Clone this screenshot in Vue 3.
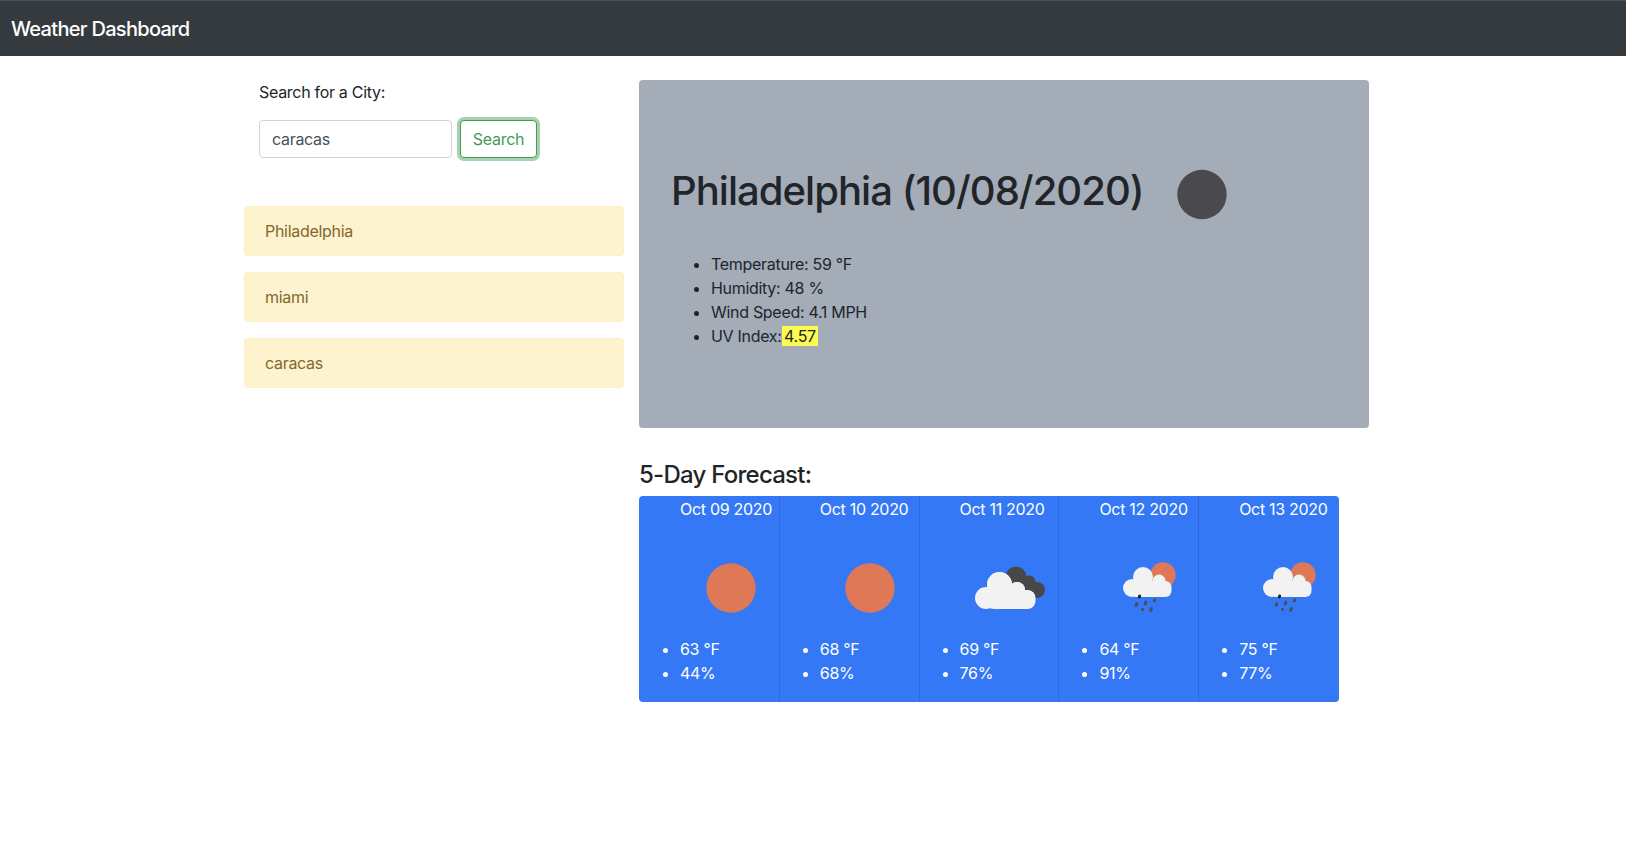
<script setup>
import { ref } from 'vue'

const city = ref('caracas')
const history = ['Philadelphia', 'miami', 'caracas']

const forecast = [
  { date: 'Oct 09 2020', icon: 'sun', temp: '63 °F', humidity: '44%' },
  { date: 'Oct 10 2020', icon: 'sun', temp: '68 °F', humidity: '68%' },
  { date: 'Oct 11 2020', icon: 'clouds', temp: '69 °F', humidity: '76%' },
  { date: 'Oct 12 2020', icon: 'rain', temp: '64 °F', humidity: '91%' },
  { date: 'Oct 13 2020', icon: 'rain', temp: '75 °F', humidity: '77%' }
]
</script>

<template>
  <nav class="navbar">Weather Dashboard</nav>

  <main class="page">
    <aside class="sidebar">
      <form class="search" @submit.prevent>
        <label class="search-label" for="city">Search for a City:</label>
        <div class="search-row">
          <input id="city" v-model="city" class="search-input" type="text" />
          <button class="search-btn" type="submit">Search</button>
        </div>
      </form>
      <div class="history">
        <div v-for="name in history" :key="name" class="alert">{{ name }}</div>
      </div>
    </aside>

    <section class="content">
      <div class="jumbotron">
        <div class="current-head">
          <h1 class="current-title">Philadelphia (10/08/2020)</h1>
          <svg class="icon" viewBox="0 0 100 100">
            <circle cx="50" cy="50.5" r="24.7" fill="#4a4a4c" />
          </svg>
        </div>
        <ul class="current-list">
          <li>Temperature: 59 °F</li>
          <li>Humidity: 48 %</li>
          <li>Wind Speed: 4.1 MPH</li>
          <li>UV Index:<span class="uv">4.57</span></li>
        </ul>
      </div>

      <h2 class="forecast-title">5-Day Forecast:</h2>
      <div class="forecast">
        <div v-for="day in forecast" :key="day.date" class="day">
          <div class="day-date">{{ day.date }}</div>
          <svg class="icon" viewBox="0 0 100 100">
            <circle v-if="day.icon === 'sun'" cx="50" cy="50" r="24.7" fill="#df7856" />
            <g v-else-if="day.icon === 'clouds'">
              <g fill="#48484a">
                <circle cx="56" cy="39" r="10.5" />
                <circle cx="69" cy="44" r="6.5" />
                <circle cx="77" cy="52" r="8" />
                <rect x="50" y="42" width="25" height="17" />
              </g>
              <g fill="#f2f2f3" stroke="#3a4a66" stroke-opacity="0.35" stroke-width="0.5">
                <circle cx="39.5" cy="46.5" r="12.5" />
                <circle cx="57" cy="52" r="8" />
              </g>
              <g fill="#f2f2f3">
                <circle cx="39.5" cy="46.5" r="12.5" />
                <circle cx="57" cy="52" r="8" />
                <circle cx="26" cy="60" r="11" />
                <rect x="26" y="52" width="49.5" height="19" rx="8" />
              </g>
            </g>
            <g v-else>
              <circle cx="63" cy="37" r="12.7" fill="#df7856" />
              <g fill="#f2f2f3">
                <circle cx="43" cy="39" r="10" />
                <circle cx="59" cy="43" r="6.5" />
                <circle cx="32" cy="50" r="9" />
                <rect x="30" y="43" width="41.5" height="16" rx="6" />
              </g>
              <g fill="#47505f">
                <rect x="38" y="56.5" width="3" height="4" rx="1.4" transform="rotate(20 39.5 58.5)" fill="#1e2430" />
                <rect x="35" y="64" width="3" height="5" rx="1.4" transform="rotate(20 36.5 66.5)" />
                <rect x="44" y="62.5" width="3" height="5" rx="1.4" transform="rotate(20 45.5 65)" />
                <rect x="53" y="60.5" width="3" height="4" rx="1.4" transform="rotate(20 54.5 62.5)" />
                <rect x="41" y="70" width="3" height="3" rx="1.4" transform="rotate(20 42.5 71.5)" />
                <rect x="49.5" y="69" width="3" height="5" rx="1.4" transform="rotate(20 51 71.5)" />
              </g>
            </g>
          </svg>
          <ul class="day-list">
            <li>{{ day.temp }}</li>
            <li>{{ day.humidity }}</li>
          </ul>
        </div>
      </div>
    </section>
  </main>
</template>

<style>
body {
  background: #fff;
}
</style>

<style scoped>
.navbar {
  height: 56px;
  box-sizing: border-box;
  padding-left: 11px;
  display: flex;
  align-items: center;
  background: #353a3f;
  border-top: 1px solid #4b5056;
  color: #fff;
  font-family: Inter, "Liberation Sans", sans-serif;
  font-size: 20px;
  font-weight: 500;
  letter-spacing: -0.7px;
}

.page {
  display: flex;
  gap: 15px;
  padding: 24px 0 0 244px;
  font-family: Inter, "Liberation Sans", sans-serif;
  font-size: 16px;
  line-height: 24px;
  letter-spacing: -0.3px;
  color: #212529;
}

.sidebar {
  width: 380px;
  flex-shrink: 0;
}

.search {
  padding-left: 15px;
}

.search-label {
  display: block;
  margin-bottom: 16px;
}

.search-row {
  display: flex;
  gap: 8px;
}

.search-input {
  width: 193px;
  height: 38px;
  box-sizing: border-box;
  padding: 0 12px;
  border: 1px solid #ced4da;
  border-radius: 4px;
  outline: none;
  color: #495057;
  font: inherit;
  letter-spacing: inherit;
}

.search-btn {
  width: 77px;
  height: 38px;
  box-sizing: border-box;
  padding: 0;
  background: #fff;
  border: 1px solid #469a58;
  border-radius: 4px;
  box-shadow: 0 0 0 3px #a6d2b0;
  color: #469a58;
  font: inherit;
  letter-spacing: inherit;
}

.history {
  margin-top: 48px;
  display: flex;
  flex-direction: column;
  gap: 16px;
}

.alert {
  padding: 12px 20px;
  background: #fdf3cf;
  border: 1px solid #fdf0c6;
  border-radius: 4px;
  color: #84682a;
}

.content {
  width: 730px;
  flex-shrink: 0;
}

.jumbotron {
  height: 348px;
  box-sizing: border-box;
  padding: 64px 32px;
  background: #a4acb8;
  border-radius: 4px;
}

.current-head {
  display: flex;
  align-items: center;
  gap: 8.5px;
  margin-bottom: 8px;
}

.current-title {
  margin: 0 0 7px;
  font-size: 40px;
  font-weight: 500;
  line-height: 48px;
  letter-spacing: -0.96px;
}

.current-list {
  margin: 0;
  padding-left: 40px;
}

.uv {
  padding: 0 2.5px;
  background: #fdfb50;
}

.forecast-title {
  margin: 32px 0 7px 0;
  font-size: 24px;
  font-weight: 500;
  line-height: 29px;
  letter-spacing: -0.75px;
}

.forecast {
  display: grid;
  grid-template-columns: repeat(4, 139.8px) 140.8px;
  width: 700px;
  height: 206px;
  background: #3578f5;
  border-radius: 4px;
  color: #fff;
}

.day {
  border-left: 1px solid rgba(0, 0, 0, 0.125);
  padding: 1px 0 0 40px;
}

.day:first-child {
  border-left-color: transparent;
}

.day-date {
  margin-bottom: 16.5px;
  white-space: nowrap;
}

.icon {
  display: block;
  width: 100px;
  height: 100px;
  flex-shrink: 0;
}

.day .icon {
  margin-left: 0.5px;
  margin-bottom: -0.5px;
}

.day-list {
  margin: 0;
  padding-left: 0;
}
</style>
